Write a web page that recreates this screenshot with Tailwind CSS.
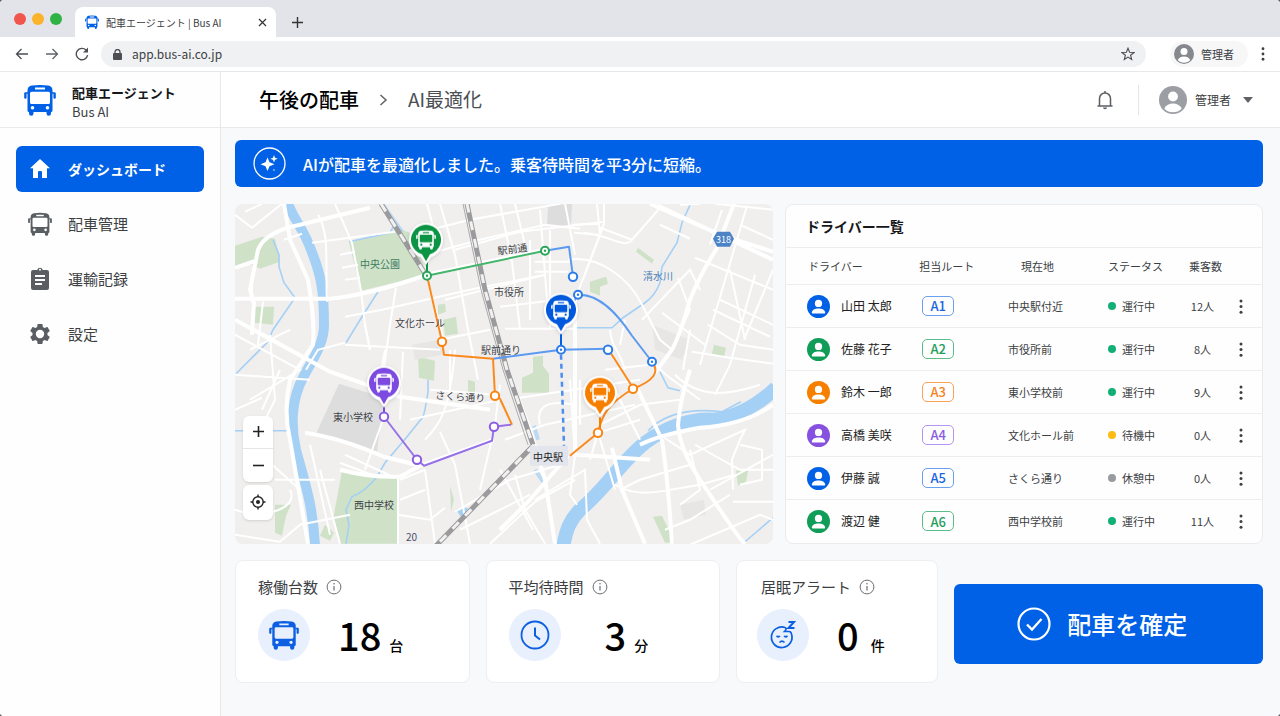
<!DOCTYPE html>
<html lang="ja">
<head>
  <meta charset="UTF-8">
  <meta name="viewport" content="width=device-width, initial-scale=1.0">
  <title>配車エージェント | Bus AI</title>
  <script src="https://cdn.jsdelivr.net/npm/@tailwindcss/browser@4"></script>
</head>
<body class="bg-[#555a61] font-['Noto_Sans_CJK_JP',sans-serif] text-[#3c4043]">

  <!-- アイコン定義 -->
  <svg class="hidden">
    <symbol id="icon-bus" viewBox="0 0 32 32">
      <path fill="currentColor" fill-rule="evenodd" d="M8 1.500Q16 .5 24 1.500Q28.500 2 28.500 6.500V26.500Q28.500 28 27 28V29.500A2 2 0 0 1 22.500 29.500V28H9.500V29.500A2 2 0 0 1 5 29.500V28Q3.500 28 3.500 26.500V6.500Q3.500 2 8 1.500ZM11 3.600V5.600H21V3.600ZM7.500 7.800Q6 7.800 6 9.300V18.500Q6 20 7.500 20H24.500Q26 20 26 18.500V9.300Q26 7.800 24.500 7.800ZM8.500 22A1.800 1.800 0 1 0 8.500 25.600A1.800 1.800 0 1 0 8.500 22ZM23.500 22A1.800 1.800 0 1 0 23.500 25.600A1.800 1.800 0 1 0 23.500 22Z"/>
      <path fill="none" stroke="currentColor" stroke-width="1.500" d="M4 9H2M28 9H30"/>
      <rect x="0.200" y="8.300" width="2.400" height="6.500" rx="1.200" fill="currentColor"/>
      <rect x="29.400" y="8.300" width="2.400" height="6.500" rx="1.200" fill="currentColor"/>
    </symbol>
    <symbol id="icon-user" viewBox="0 0 24 24">
      <circle cx="12" cy="12" r="12" fill="currentColor"/>
      <circle cx="12" cy="8.800" r="3.800" fill="#fff"/>
      <path fill="#fff" d="M5 18.500C5 15.500 8.500 14 12 14S19 15.500 19 18.500Q19 19.300 18.200 19.300H5.800Q5 19.300 5 18.500Z"/>
    </symbol>
    <symbol id="icon-account" viewBox="0 0 24 24">
      <circle cx="12" cy="12" r="12" fill="currentColor"/>
      <circle cx="12" cy="9" r="4.200" fill="#fff"/>
      <path fill="#fff" d="M4.500 19.200C6 16.300 9 15 12 15S18 16.300 19.500 19.200C17.500 21.400 15 22.500 12 22.500S6.500 21.400 4.500 19.200Z"/>
    </symbol>
    <symbol id="icon-info" viewBox="0 0 16 16">
      <circle cx="8" cy="8" r="6.900" fill="none" stroke="currentColor" stroke-width="1"/>
      <path d="M8 7V11.500" stroke="currentColor" stroke-width="1.200"/>
      <circle cx="8" cy="4.800" r="0.800" fill="currentColor"/>
    </symbol>
    <symbol id="icon-dots" viewBox="0 0 4 16">
      <circle cx="2" cy="2" r="1.600" fill="currentColor"/>
      <circle cx="2" cy="8" r="1.600" fill="currentColor"/>
      <circle cx="2" cy="14" r="1.600" fill="currentColor"/>
    </symbol>
    <symbol id="pin" viewBox="-20 -20 40 48" overflow="visible">
      <path fill="#fff" d="M0 25L-5 17.500C-12 15.500-17 8-17 0A17 17 0 0 1 17 0C17 8 12 15.500 5 17.500Z"/>
      <path fill="currentColor" d="M0 21.500L-4 14.500A15 15 0 1 1 4 14.500Z"/>
    </symbol>
  </svg>

  <div class="flex min-h-screen flex-col overflow-hidden rounded-[4px] bg-white">

    <!-- ブラウザのタブ -->
    <div class="flex h-[37px] items-end bg-[#e3e4e9]">
      <div class="flex h-full w-[75px] items-center gap-[6px] pl-[14px]">
        <span class="size-3 rounded-full bg-[#f1564e]"></span>
        <span class="size-3 rounded-full bg-[#fbb32c]"></span>
        <span class="size-3 rounded-full bg-[#2fb344]"></span>
      </div>
      <div class="flex h-[30px] w-[201px] items-center rounded-t-lg bg-white pr-2 pl-[10px]">
        <svg class="mr-[7px] size-[14px] text-[#0061e6]"><use href="#icon-bus"/></svg>
        <span class="flex-1 text-[10px] whitespace-nowrap">配車エージェント | Bus AI</span>
        <button class="flex size-3 items-center justify-center" aria-label="タブを閉じる">
          <svg class="size-[9px]" viewBox="0 0 9 9"><path d="M1 1L8 8M8 1L1 8" stroke="#333" stroke-width="1.200"/></svg>
        </button>
      </div>
      <button class="flex h-[30px] w-[42px] items-center justify-center" aria-label="新しいタブ">
        <svg class="size-[11px]" viewBox="0 0 11 11"><path d="M5.500 0V11M0 5.500H11" stroke="#333" stroke-width="1.400"/></svg>
      </button>
    </div>

    <!-- アドレスバー -->
    <div class="flex h-[35px] items-center border-b border-[#e6e8ea] bg-white pr-[15px] pl-[15px]">
      <button class="mr-4" aria-label="戻る">
        <svg class="size-[14px]" viewBox="0 0 14 14" fill="none" stroke="#4b4f54" stroke-width="1.300"><path d="M13 7H1.500M6.500 2L1.500 7L6.500 12"/></svg>
      </button>
      <button class="mr-4" aria-label="進む">
        <svg class="size-[14px]" viewBox="0 0 14 14" fill="none" stroke="#5f6368" stroke-width="1.300"><path d="M1 7H12.500M7.500 2L12.500 7L7.500 12"/></svg>
      </button>
      <button class="mr-3" aria-label="再読み込み">
        <svg class="size-[14px]" viewBox="0 0 14 14"><path d="M12.600 8.200A5.700 5.700 0 1 1 11 3" fill="none" stroke="#4b4f54" stroke-width="1.400"/><path d="M13 .5V5.500H8Z" fill="#4b4f54"/></svg>
      </button>
      <div class="flex h-[26px] flex-1 items-center rounded-full bg-[#f0f1f3] pr-[11px] pl-3">
        <svg class="mr-[10px] h-[11px] w-[9px] shrink-0" viewBox="0 0 9 11"><rect y="4" width="9" height="7" rx="1" fill="#4b4f54"/><path d="M2 4.500V3A2.500 2.500 0 0 1 7 3V4.500" fill="none" stroke="#4b4f54" stroke-width="1.300"/></svg>
        <input class="min-w-0 flex-1 bg-transparent text-[12px] outline-none" type="text" value="app.bus-ai.co.jp" aria-label="アドレス">
        <button aria-label="ブックマーク">
          <svg class="size-[14px]" viewBox="0 0 14 14"><path d="M7 1.200L8.600 5.200L13 5.500L9.600 8.200L10.700 12.500L7 10.100L3.300 12.500L4.400 8.200L1 5.500L5.400 5.200Z" fill="none" stroke="#4b4f54" stroke-width="1.100"/></svg>
        </button>
      </div>
      <button class="mr-[13px] ml-6 flex h-[26px] w-[78px] items-center gap-[7px] rounded-full bg-[#f7f7f8] pl-1 text-[11px]">
        <svg class="size-5 text-[#85888c]"><use href="#icon-account"/></svg>管理者
      </button>
      <button aria-label="メニュー"><svg class="h-[14px] w-1 text-[#3c4043]"><use href="#icon-dots"/></svg></button>
    </div>

    <div class="flex flex-1">

      <!-- サイドバー -->
      <aside class="flex w-[221px] shrink-0 flex-col border-r border-[#e6e8eb] bg-[#fefefe]">
        <a href="#" class="flex h-14 items-center gap-4 border-b border-[#e8eaed] pl-6">
          <svg class="size-8 text-[#0061e6]"><use href="#icon-bus"/></svg>
          <span class="flex flex-col pt-1">
            <span class="text-[13px] leading-[19px] font-bold text-[#15171a]">配車エージェント</span>
            <span class="text-[13px] leading-[19px]">Bus AI</span>
          </span>
        </a>
        <nav class="flex flex-col gap-[9px] px-4 pt-[18px] text-[15px]">
          <a href="#" class="flex h-[46px] items-center gap-4 rounded-md bg-[#0061e6] pl-3 font-bold text-white">
            <svg class="size-6" viewBox="0 0 24 24"><path fill="#fff" d="M12 2L22 11.200H19V21H14V15Q14 14 13 14H11Q10 14 10 15V21H5V11.200H2Z"/></svg>
            <span class="text-sm">ダッシュボード</span>
          </a>
          <a href="#" class="flex h-[46px] items-center gap-4 pl-3">
            <svg class="size-6 text-[#5a5e63]"><use href="#icon-bus"/></svg>
            配車管理
          </a>
          <a href="#" class="flex h-[46px] items-center gap-4 pl-3">
            <svg class="size-6" viewBox="0 0 24 24"><path fill="#5a5e63" fill-rule="evenodd" d="M5 3H9.200A2.900 2.900 0 0 1 14.800 3H19Q21 3 21 5V21Q21 23 19 23H5Q3 23 3 21V5Q3 3 5 3ZM12 1.800A1 1 0 1 0 12 3.800A1 1 0 1 0 12 1.800ZM7 8V10H17V8ZM7 12V14H17V12ZM7 16V18H14V16Z"/></svg>
            運輸記録
          </a>
          <a href="#" class="flex h-[46px] items-center gap-4 pl-3">
            <svg class="size-6" viewBox="0 0 24 24"><path fill="#5a5e63" d="M19.430 12.980c.04-.32.07-.64.07-.98s-.03-.66-.07-.98l2.110-1.650c.19-.15.24-.42.12-.64l-2-3.460c-.12-.22-.39-.3-.61-.22l-2.490 1c-.52-.4-1.080-.73-1.690-.98l-.38-2.650C14.460 2.180 14.250 2 14 2h-4c-.25 0-.46.18-.49.42l-.38 2.650c-.61.25-1.170.59-1.690.98l-2.490-1c-.23-.09-.49 0-.61.22l-2 3.460c-.13.22-.07.49.12.64l2.110 1.650c-.04.32-.07.65-.07.98s.03.66.07.98l-2.110 1.650c-.19.15-.24.42-.12.64l2 3.460c.12.22.39.3.61.22l2.490-1c.52.4 1.080.73 1.690.98l.38 2.650c.03.24.24.42.49.42h4c.25 0 .46-.18.49-.42l.38-2.650c.61-.25 1.170-.59 1.690-.98l2.490 1c.23.09.49 0 .61-.22l2-3.460c.12-.22.07-.49-.12-.64l-2.110-1.650zM12 16.200a4.200 4.200 0 1 1 0-8.400 4.200 4.200 0 0 1 0 8.400z"/></svg>
            設定
          </a>
        </nav>
      </aside>

      <div class="flex min-w-0 flex-1 flex-col">

        <!-- ヘッダー -->
        <header class="flex h-14 items-center border-b border-[#e6e8eb] bg-white pr-[27px] pl-[38px]">
          <h1 class="text-[20px] font-medium text-black">午後の配車</h1>
          <svg class="mr-5 ml-5 h-3 w-[9px]" viewBox="0 0 9 12"><path d="M1.500 1L7 6L1.500 11" fill="none" stroke="#5f6368" stroke-width="1.500"/></svg>
          <span class="flex-1 text-[19px] text-[#4b4f54]">AI最適化</span>
          <button class="pr-6" aria-label="通知">
            <svg class="h-5 w-[18px]" viewBox="0 0 18 20"><path d="M1.500 16H16.500M3.500 16V8.500A5.500 5.500 0 0 1 14.500 8.500V16M9 1V3" fill="none" stroke="#5a5e63" stroke-width="1.500"/><path d="M7 17.500H11A2 1.800 0 0 1 7 17.500Z" fill="#5a5e63"/></svg>
          </button>
          <button class="flex h-[30px] items-center border-l border-[#e3e5e8] pl-5 text-[12px]">
            <svg class="mr-2 size-7 text-[#9b9ea2]"><use href="#icon-account"/></svg>
            管理者
            <svg class="ml-3 h-[6px] w-[10px]" viewBox="0 0 10 6"><path d="M0 0H10L5 6Z" fill="#5f6368"/></svg>
          </button>
        </header>

        <main class="flex flex-1 flex-col bg-[#f7f9fb] pt-3 pr-[17px] pb-8 pl-[14px]">

          <!-- 通知バナー -->
          <div class="mb-[17px] flex h-[47px] items-center rounded-md bg-[#0061e6] pl-[18px] text-[16px] font-medium text-white">
            <svg class="mr-[17px] size-[33px]" viewBox="0 0 33 33">
              <circle cx="16.500" cy="16.500" r="15.500" fill="none" stroke="#fff" stroke-width="1.300"/>
              <path fill="#fff" d="M14.500 10.500L16.500 15.300L21.500 17.200L16.500 19.200L14.500 24L12.500 19.200L7.500 17.200L12.500 15.300ZM21 8L22 10.700L24.800 11.700L22 12.700L21 15.500L20 12.700L17.300 11.700L20 10.700Z"/>
              <circle cx="21" cy="23" r="1.100" fill="#fff" opacity=".5"/>
            </svg>
            AIが配車を最適化しました。乗客待時間を平3分に短縮。
          </div>

          <div class="mb-4 grid grid-cols-[538fr_478fr] gap-3">

            <!-- 地図 -->
            <section class="relative min-h-[339px] overflow-hidden rounded-lg bg-[#f0efee]">
              <svg class="absolute inset-0 h-full w-full" viewBox="235 204 538 340" preserveAspectRatio="xMidYMid slice" fill="none">
                <!-- 公園・学校 -->
                <g fill="#cfe2c8">
                  <path d="M235 246L262 237L275 239L280 262L260 269L250 264L235 269Z"/>
                  <path d="M349 243L400 229L412 234L427 275L361 291Z"/>
                  <path d="M255 307L274 307L273 325L253 323Z"/>
                  <path d="M342 471L398 478V544H340L333 520Z"/>
                  <path d="M438 305L445 304L446 312L438 315ZM443 320L456 317L458 334L445 336ZM418 357L435 361L434 381L419 378ZM533 357L543 356V366L549 374V393H522V378L533 373Z"/>
                  <path d="M590 282L606 277L608 284L600 287V296L590 292Z"/>
                  <path d="M638 248L654 260L652 264L636 252ZM714 345L726 348L724 357L712 354ZM736 471L748 471L746 482L738 486ZM653 517L662 516L675 543H665ZM275 505H291L286 516L282 536L275 533Z"/>
                  <path d="M468 380L475 382V392H468ZM450 486L454 500L451 512ZM325 525L334 533L330 541L320 536Z"/>
                </g>
                <path fill="#dedddd" d="M339 384L384 398L377 452L316 434ZM548 206L572 204L571 227L547 225Z"/>
                <path fill="#e7e6e5" d="M412 345L440 340L443 355L415 360ZM652 325L690 340L682 360L655 350ZM680 505L704 500L706 515L684 520Z"/>

                <!-- 川 -->
                <g stroke="#a5d0f5">
                  <path stroke-width="10" d="M288 204C294 220 304 230 311 250C321 275 324 290 324 325C324 345 312 360 303 378C292 398 290 425 296 450C304 480 313 505 315 546"/>
                  <path stroke-width="14" d="M776 388C755 408 735 417 715 420C690 418 665 428 645 443C620 463 605 490 580 510C570 520 566 530 563 548"/>
                  <g stroke-width="1.600">
                    <path d="M691 203L682 223L677 243L662 267L660 283Q655 296 645 303L623 318L612 328L577 328"/>
                    <path d="M273 240L279 255V267L284 283L295 298L273 330L267 343L236 374"/>
                    <path d="M378 292L362 317L346 343"/>
                    <path d="M428 380V392Q425 412 423 417L407 437L385 463L377 477Q365 492 352 497L346 510L349 525L346 544"/>
                    <path d="M235 431H297M349 242L390 233L396 222M660 372L668 388L680 391M745 542L773 518M648 431C670 408 705 410 722 412L741 402"/>
                  </g>
                  <path stroke-width="4" d="M382 204L402 232M535 470L545 485M534 426L538 440" opacity=".7"/>
                  <path fill="#a5d0f5" stroke="none" d="M456 510L468 508L463 520Z"/>
                </g>

                <!-- 細い道路 -->
                <g stroke="#fff" stroke-width="2">
                  <path d="M235 215L252 228L282 204M245 212L262 204M252 275V303M263 302L258 345M284 240L302 234M312 243L395 232M318 215C330 235 325 260 327 302"/>
                  <path d="M335 204L352 243L361 291L365 325L370 350M340 255L355 252M342 268L358 265M345 280L360 278M345 317L382 310L470 290L545 275"/>
                  <path d="M396 288L390 325L383 375M427 204L437 242M440 204L455 255L468 330L478 380M500 204L512 262L520 330M515 204L525 245M455 250L520 232L605 222"/>
                  <path d="M410 235L470 220L560 204M425 255L480 240L545 225L580 229M445 300L545 275M440 340L490 330M430 290L445 345M530 240V320M550 230V330M535 262H570M535 272H568M540 210L547 300"/>
                  <path d="M565 204L575 255M500 307L575 298M505 329H575M572 225L600 224M574 233L598 235M597 204L600 235L583 280M604 204V224L575 300M583 233C610 235 625 250 632 240L660 208"/>
                  <path d="M568 260C600 255 630 280 642 305L660 340L672 350M632 240L600 228M660 225L690 239M642 320L690 270L700 290M662 313L705 345M675 343L690 310L678 278"/>
                  <path d="M720 300L773 325M713 310L770 337M730 270L745 340M755 275L730 365L715 395M708 325L740 345L773 350M692 352L730 358L773 364M690 330L683 370M747 206L700 365M773 270L744 340"/>
                  <path d="M235 335L300 370L250 400M235 375L310 380M270 335L275 400L260 430M280 370L262 410M250 350L290 330M235 410L262 398"/>
                  <path d="M250 445L300 490M275 480L335 480M290 490C300 510 260 520 235 510M235 535L280 542L300 525L350 515M320 470L340 544M250 520L270 500M310 445L330 535"/>
                  <path d="M306 370L318 350L345 343M345 345L440 350M385 350L378 390M403 352L400 420M365 325L370 350"/>
                  <path d="M384 417L365 470M340 463L377 477M345 455L395 478M398 478V544M400 480L425 470M425 470L435 544M400 500L425 490M398 515L430 520L445 508"/>
                  <path d="M440 432L455 465L470 544M425 440C440 425 450 410 455 350M494 430L480 490M500 385L495 425M450 350V390M410 420L500 400M430 390L495 395"/>
                  <path d="M455 512L510 480L560 465M460 530L530 495M490 544L535 502L575 480M500 470L533 530M515 475L525 510L545 544M535 500L585 470L587 520L600 544"/>
                  <path d="M570 380L575 455L570 495L577 505M580 380V425M540 425C535 405 550 400 575 405M505 440L545 425L635 405M598 433L615 490M520 398L640 380"/>
                  <path d="M615 390L640 440M640 420L598 433L590 460M660 435L690 455L745 430L740 440L732 460L733 490M695 445L740 470H773M710 490L773 455M690 450L700 490L680 505"/>
                  <path d="M615 485C640 500 665 490 700 485L735 475M620 490L640 480L690 465M665 530L690 520L730 495M690 545L760 515L773 520M733 502H773M740 445L762 450V480L740 485"/>
                  <path d="M610 330C612 350 620 350 625 370M625 320L620 345M652 362L667 376L700 400M680 400L640 405L600 425M590 385L605 400M675 375C700 400 730 395 760 385"/>
                  <path d="M700 204L680 205M715 204L773 210M722 210L710 245M740 225L773 240M695 258L773 290M605 370L650 365"/>
                </g>
                <!-- 主要道路 -->
                <g stroke="#fff" stroke-width="4">
                  <path d="M370 208L300 225Q265 232 258 250L250 290L254 303L252 335"/>
                  <path d="M235 299H330Q370 295 427 275L545 250"/>
                  <path d="M235 268L256 261M284 204L290 240L308 280Q315 320 313 345L290 380Q283 410 290 440L308 544"/>
                  <path d="M235 320L330 372L400 397L490 410"/>
                  <path d="M305 433Q340 438 384 457L420 466M340 470Q370 478 400 477L420 466L494 440"/>
                  <path d="M575 300V455L650 460M507 370L530 430L545 480L555 544"/>
                  <path d="M734 204L716 250Q700 275 690 300Q680 335 672 350L655 373"/>
                  <path d="M650 204L720 235L773 252M658 206L773 260"/>
                  <path d="M690 370Q680 400 678 425Q680 450 700 480L720 510Q740 540 745 544"/>
                  <path d="M637 388L662 440Q668 480 672 544M612 448L622 490L645 544"/>
                  <path d="M773 405Q745 425 700 428Q660 435 640 445"/>
                  <path d="M568 456L530 500L500 530"/>
                </g>

                <!-- 線路 -->
                <g stroke="#9b9b9d" stroke-width="5">
                  <path d="M381 204L427 277M467 204L485 290L507 370L533 445M534 445L436 546"/>
                </g>
                <g stroke="#f1f1f1" stroke-width="3" stroke-dasharray="9 9">
                  <path d="M381 204L427 277M467 204L485 290L507 370L533 445M534 445L436 546"/>
                </g>
                <path stroke="#aaa" stroke-width="1" d="M463 204L481 290L503 370L528 445"/>

                <!-- 駅・標識 -->
                <path fill="#e2e5ec" d="M530 446H568V466H530Z"/>
                <path fill="#4b83c6" d="M717 232H730L734 239L730 247H717L713 239Z"/>

                <!-- 運行ルート -->
                <g stroke-width="2" stroke-linejoin="round">
                  <path stroke="#43b56b" d="M427 276L545 251"/>
                  <path stroke="#5b9af0" d="M545 251L569 247L573 277M578 295C600 294 618 315 632 336L652 362M578 295L570 308M493 359L561 350L608 349"/>
                  <path stroke="#fb8a1e" d="M427 276L442 342L444 355L493 359L495 396L500 399L512 425M608 349L633 388M652 362C660 372 654 381 633 389C608 404 602 415 598 433L570 456"/>
                  <path stroke="#9672e6" d="M384 417L417 460L424 466L492 441L494 427L511 425"/>
                  <path stroke="#4b8df0" stroke-width="2.500" stroke-dasharray="5 4" d="M561 355L564 446"/>
                  <path stroke="#0b9444" d="M427 262V276"/>
                  <path stroke="#0061e6" d="M561 330V350"/>
                  <path stroke="#7c4ae0" d="M384 402V417"/>
                  <path stroke="#f77f00" d="M600 412V430"/>
                </g>
                <g fill="#fff" stroke-width="2">
                  <g stroke="#2aa55a"><circle cx="427" cy="276" r="4"/><circle cx="545" cy="251" r="4"/></g>
                  <g stroke="#2b7bea"><circle cx="573" cy="277" r="4.200"/><circle cx="578" cy="295" r="4"/><circle cx="561" cy="350" r="4"/><circle cx="608" cy="350" r="4.200"/><circle cx="652" cy="362" r="4"/></g>
                  <g stroke="#f98413"><circle cx="442" cy="342" r="4.200"/><circle cx="495" cy="396" r="4.200"/><circle cx="633" cy="389" r="4.200"/><circle cx="598" cy="433" r="4.200"/></g>
                  <g stroke="#8a5be3"><circle cx="384" cy="417" r="4.200"/><circle cx="417" cy="460" r="4.200"/><circle cx="494" cy="427" r="4.200"/></g>
                </g>
                <circle cx="427" cy="276" r="1.200" fill="#2aa55a"/><circle cx="545" cy="251" r="1.200" fill="#2aa55a"/>
                <g fill="#2b7bea"><circle cx="578" cy="295" r="1.200"/><circle cx="561" cy="350" r="1.200"/><circle cx="652" cy="362" r="1.200"/></g>

                <!-- 地名 -->
                <g fill="#3f4348" font-size="10">
                  <text x="360" y="268" fill="#3d7d62">中央公園</text>
                  <text x="498" y="255" transform="rotate(-7 498 255)">駅前通</text>
                  <text x="494" y="296">市役所</text>
                  <text x="395" y="327">文化ホール</text>
                  <text x="481" y="354">駅前通り</text>
                  <text x="435" y="399" transform="rotate(4 435 399)">さくら通り</text>
                  <text x="333" y="421">東小学校</text>
                  <text x="354" y="509">西中学校</text>
                  <text x="533" y="461" fill="#222">中央駅</text>
                  <text x="643" y="280" fill="#4b80b8">清水川</text>
                  <text x="406" y="541" fill="#4a4e70">20</text>
                  <text x="716" y="243" fill="#fff" font-size="9">318</text>
                </g>

                <!-- 車両ピン -->
                <g class="drop-shadow">
                  <use href="#pin" x="406" y="220" width="40" height="48" color="#0b9444"/>
                  <use href="#pin" x="541" y="290" width="40" height="48" color="#0058dc"/>
                  <use href="#pin" x="364" y="363" width="40" height="48" color="#7c4ae0"/>
                  <use href="#pin" x="580" y="373" width="40" height="48" color="#f77f00"/>
                </g>
                <g color="#fff">
                  <use href="#icon-bus" x="416" y="230" width="20" height="20"/>
                  <use href="#icon-bus" x="551" y="300" width="20" height="20"/>
                  <use href="#icon-bus" x="374" y="373" width="20" height="20"/>
                  <use href="#icon-bus" x="590" y="383" width="20" height="20"/>
                </g>
              </svg>

              <div class="absolute bottom-6 left-2 flex w-[30px] flex-col gap-[3px]">
                <div class="flex flex-col divide-y divide-[#e6e6e6] rounded-md bg-white shadow">
                  <button class="flex h-[33px] items-center justify-center" aria-label="拡大">
                    <svg class="size-[11px]" viewBox="0 0 11 11"><path d="M5.500 0V11M0 5.500H11" stroke="#222" stroke-width="1.600"/></svg>
                  </button>
                  <button class="flex h-[33px] items-center justify-center" aria-label="縮小">
                    <svg class="size-[11px]" viewBox="0 0 11 11"><path d="M0 5.500H11" stroke="#222" stroke-width="1.600"/></svg>
                  </button>
                </div>
                <button class="flex h-[35px] items-center justify-center rounded-md bg-white shadow" aria-label="現在地">
                  <svg class="size-4" viewBox="0 0 16 16"><circle cx="8" cy="8" r="5.200" fill="none" stroke="#222" stroke-width="1.400"/><circle cx="8" cy="8" r="2" fill="#222"/><path d="M8 .5V3M8 13V15.500M.5 8H3M13 8H15.500" stroke="#222" stroke-width="1.400"/></svg>
                </button>
              </div>
            </section>

            <!-- ドライバー一覧 -->
            <section class="rounded-lg border border-[#e9ebee] bg-[#fefefe]">
              <h2 class="flex h-[42px] items-center pl-5 text-[14px] font-bold text-[#15171a]">ドライバー一覧</h2>
              <table class="w-full table-fixed text-left">
                <colgroup>
                  <col class="w-[28%]"><col class="w-[18%]"><col class="w-[21%]"><col class="w-[16%]"><col class="w-[9%]"><col class="w-[8%]">
                </colgroup>
                <thead class="text-[11px] whitespace-nowrap">
                  <tr class="h-[37px] border-y border-[#eceef0]">
                    <th class="pl-[22px] font-normal">ドライバー</th>
                    <th class="font-normal">担当ルート</th>
                    <th class="pl-4 font-normal">現在地</th>
                    <th class="pl-[3px] font-normal">ステータス</th>
                    <th class="pl-2 font-normal">乗客数</th>
                    <th></th>
                  </tr>
                </thead>
                <tbody id="drivers" class="text-[11px] whitespace-nowrap"></tbody>
              </table>
            </section>
          </div>

          <!-- 集計カード -->
          <div class="grid grid-cols-[235fr_235fr_202fr_310fr] items-center gap-4">
            <section class="h-[123px] rounded-lg border border-[#eceef1] bg-white pt-[14px] pl-[22px]">
              <h3 class="flex items-center gap-2 text-[15px] leading-6">稼働台数 <svg class="size-4 text-[#6b6f74]"><use href="#icon-info"/></svg></h3>
              <div class="mt-[10px] flex items-center">
                <span class="flex size-[52px] items-center justify-center rounded-full bg-[#e8effd]">
                  <svg class="size-[30px] text-[#0b5fe0]"><use href="#icon-bus"/></svg>
                </span>
                <p class="ml-7 flex items-baseline gap-2 text-black"><span class="text-[38px] leading-[52px] font-medium">18</span><span class="text-[14px] font-medium">台</span></p>
              </div>
            </section>
            <section class="h-[123px] rounded-lg border border-[#eceef1] bg-white pt-[14px] pl-[22px]">
              <h3 class="flex items-center gap-2 text-[15px] leading-6">平均待時間 <svg class="size-4 text-[#6b6f74]"><use href="#icon-info"/></svg></h3>
              <div class="mt-[10px] flex items-center">
                <span class="flex size-[52px] items-center justify-center rounded-full bg-[#e8effd]">
                  <svg class="size-[30px]" viewBox="0 0 30 30" fill="none" stroke="#0b5fe0" stroke-width="1.800"><circle cx="15" cy="15" r="13.500"/><path d="M15 7.500V15.500L20 19.500" stroke-width="2"/></svg>
                </span>
                <p class="ml-11 flex items-baseline gap-2 text-black"><span class="text-[38px] leading-[52px] font-medium">3</span><span class="text-[14px] font-medium">分</span></p>
              </div>
            </section>
            <section class="h-[123px] rounded-lg border border-[#eceef1] bg-white pt-[14px] pl-5">
              <h3 class="flex items-center gap-2 pl-1 text-[15px] leading-6">居眠アラート <svg class="size-4 text-[#6b6f74]"><use href="#icon-info"/></svg></h3>
              <div class="mt-[10px] flex items-center">
                <span class="flex size-[52px] items-center justify-center rounded-full bg-[#e8effd]">
                  <svg class="size-[30px]" viewBox="0 0 30 30" fill="none" stroke="#0b5fe0" stroke-width="1.700">
                    <path d="M17 7.500A10.300 10.300 0 1 0 23.500 14M17 7.500C19 8 18 10 16.500 11.500H21Q23 11.500 23.500 14"/>
                    <path d="M8.500 16Q10.500 17.500 12 16M16 16Q17.500 17.500 19.500 16M11.500 22.500Q14 20 16.500 22.500"/>
                    <path d="M20.500 2H26L20.500 8H26.500" stroke-width="2"/>
                  </svg>
                </span>
                <p class="ml-7 flex items-baseline gap-3 text-black"><span class="text-[38px] leading-[52px] font-medium">0</span><span class="text-[14px] font-medium">件</span></p>
              </div>
            </section>
            <button class="mt-[6px] flex h-20 items-center justify-center gap-4 rounded-md bg-[#0061e6] pr-3 text-[24px] font-medium text-white">
              <svg class="size-[34px]" viewBox="0 0 34 34" fill="none" stroke="#fff"><circle cx="17" cy="17" r="15.500" stroke-width="2.200"/><path d="M10 17.500L15 22.500L24.500 12" stroke-width="2.400"/></svg>
              配車を確定
            </button>
          </div>
        </main>
      </div>
    </div>
  </div>

  <script>
    const blue = { icon: 'text-[#0061e6]', badge: 'border-[#6b9ff2] text-[#1a66de]' };
    const green = { icon: 'text-[#0f9d58]', badge: 'border-[#5cbd8c] text-[#1f9d5c]' };
    const orange = { icon: 'text-[#f77f00]', badge: 'border-[#f9a257] text-[#f5821f]' };
    const purple = { icon: 'text-[#8650e0]', badge: 'border-[#b595f0] text-[#8a5be3]' };

    const statusColor = { '運行中': 'bg-[#12b076]', '待機中': 'bg-[#fbbc13]', '休憩中': 'bg-[#999c9f]' };

    const drivers = [
      { name: '山田 太郎', route: 'A1', place: '中央駅付近', status: '運行中', total: 12, color: blue },
      { name: '佐藤 花子', route: 'A2', place: '市役所前', status: '運行中', total: 8, color: green },
      { name: '鈴木 一郎', route: 'A3', place: '東小学校前', status: '運行中', total: 9, color: orange },
      { name: '高橋 美咲', route: 'A4', place: '文化ホール前', status: '待機中', total: 0, color: purple },
      { name: '伊藤 誠', route: 'A5', place: 'さくら通り', status: '休憩中', total: 0, color: blue },
      { name: '渡辺 健', route: 'A6', place: '西中学校前', status: '運行中', total: 11, color: green },
    ];

    document.getElementById('drivers').innerHTML = drivers.map(d => `
      <tr class="h-[43px] border-b border-[#eceef0] last:border-b-0">
        <td class="pl-[21px]">
          <div class="flex items-center gap-[11px] text-[12px] text-[#222]"><svg class="size-[23px] ${d.color.icon}"><use href="#icon-user"/></svg>${d.name}</div>
        </td>
        <td class="pl-[3px]"><span class="flex h-5 w-8 items-center justify-center rounded-[5px] border text-[13px] font-medium ${d.color.badge}">${d.route}</span></td>
        <td class="pl-[3px]">${d.place}</td>
        <td class="pl-[3px]"><div class="flex items-center gap-[6px]"><span class="size-2 rounded-full ${statusColor[d.status]}"></span>${d.status}</div></td>
        <td class="text-center">${d.total}人</td>
        <td class="pr-[3px] text-center"><button class="block w-full" aria-label="${d.name}のメニュー"><svg class="mx-auto h-[15px] w-1"><use href="#icon-dots"/></svg></button></td>
      </tr>`).join('');
  </script>
</body>
</html>
